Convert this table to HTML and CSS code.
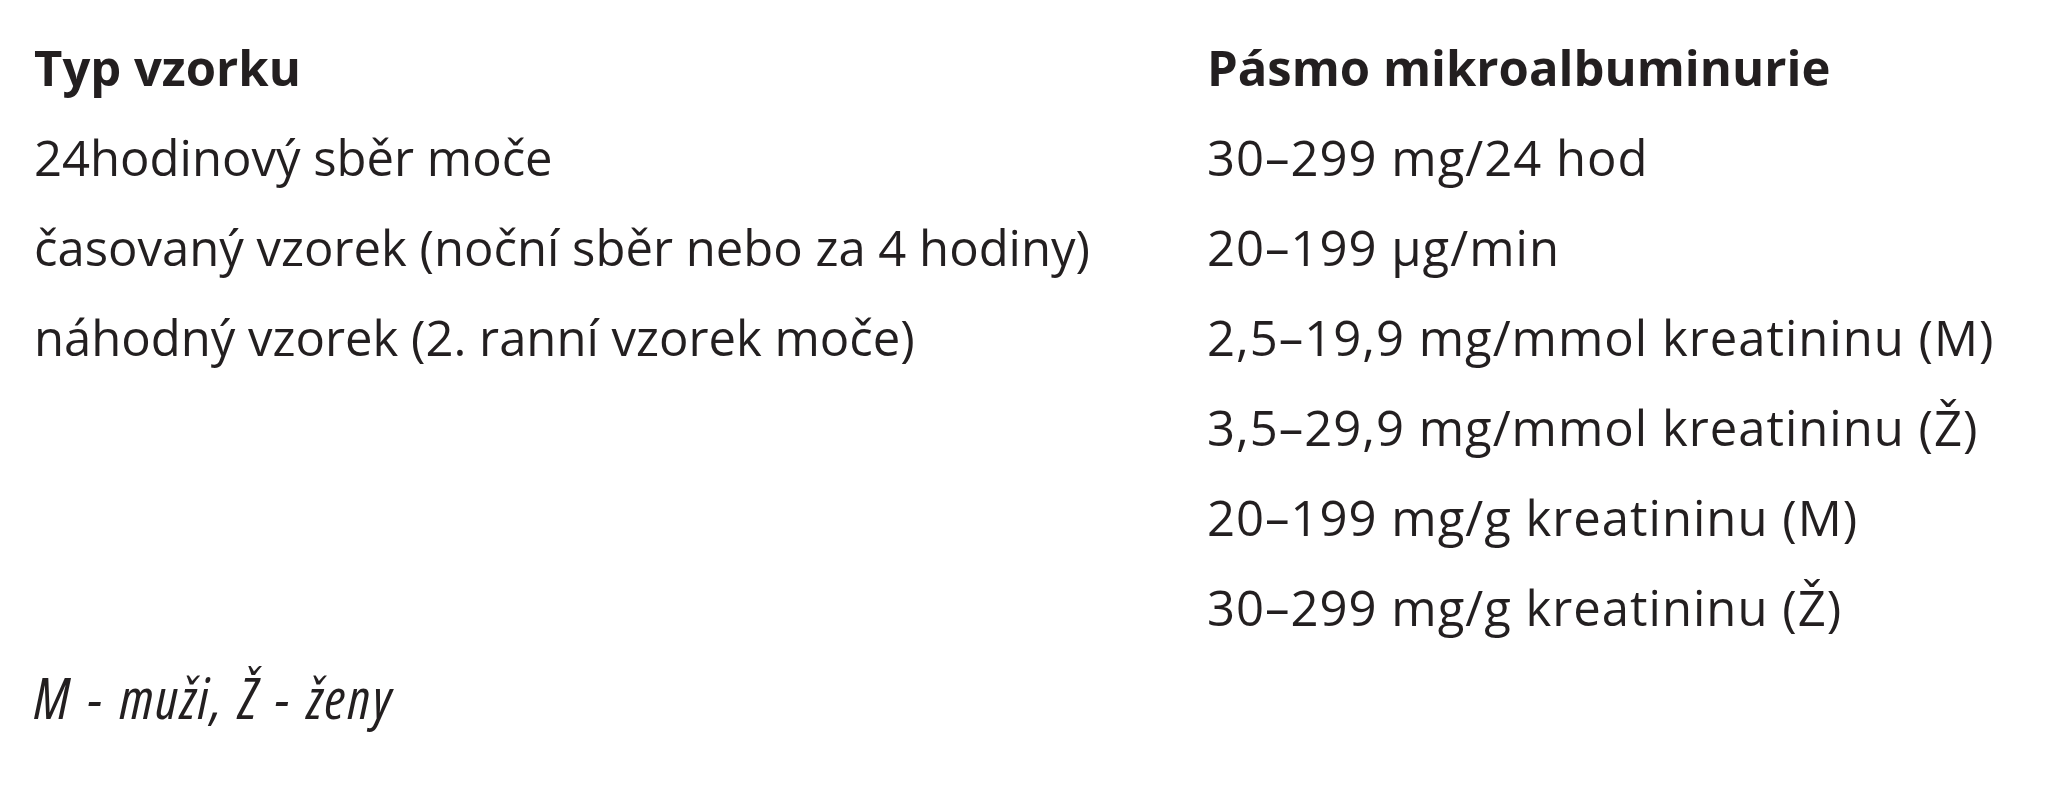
FILE: index.html
```html
<!DOCTYPE html>
<html lang="cs">
<head>
<meta charset="utf-8">
<title>Mikroalbuminurie</title>
<link rel="stylesheet" href="styles.css">
</head>
<body>
<main class="page">
  <div class="table">
    <div class="col col-left">
      <div class="cell head">Typ vzorku</div>
      <div class="cell">24hodinový sběr moče</div>
      <div class="cell">časovaný vzorek (noční sběr nebo za 4 hodiny)</div>
      <div class="cell">náhodný vzorek (2. ranní vzorek moče)</div>
    </div>
    <div class="col col-right">
      <div class="cell head">Pásmo mikroalbuminurie</div>
      <div class="cell">30–299 mg/24 hod</div>
      <div class="cell">20–199 μg/min</div>
      <div class="cell">2,5–19,9 mg/mmol kreatininu (M)</div>
      <div class="cell">3,5–29,9 mg/mmol kreatininu (Ž)</div>
      <div class="cell">20–199 mg/g kreatininu (M)</div>
      <div class="cell">30–299 mg/g kreatininu (Ž)</div>
    </div>
  </div>
  <p class="note">M - muži, Ž - ženy</p>
</main>
</body>
</html>
```
FILE: styles.css
```css
html, body {
  margin: 0;
  padding: 0;
  background: #ffffff;
}

.page {
  padding: 22px 0 0 34px;
  color: #231f20;
  font-family: "Open Sans", "Liberation Sans", sans-serif;
}

.table {
  display: grid;
  grid-template-columns: 1173px auto;
}

.col {
  display: flex;
  flex-direction: column;
}

.cell {
  font-size: 49px;
  line-height: 90px;
  white-space: nowrap;
}

.col-right .cell {
  letter-spacing: 1px;
}

.col-right .head {
  letter-spacing: 0;
}

.head {
  font-weight: 700;
}

.note {
  margin: 0;
  font-size: 56px;
  line-height: 90px;
  font-style: italic;
  font-stretch: condensed;
  letter-spacing: 2px;
  word-spacing: 4px;
}
```
